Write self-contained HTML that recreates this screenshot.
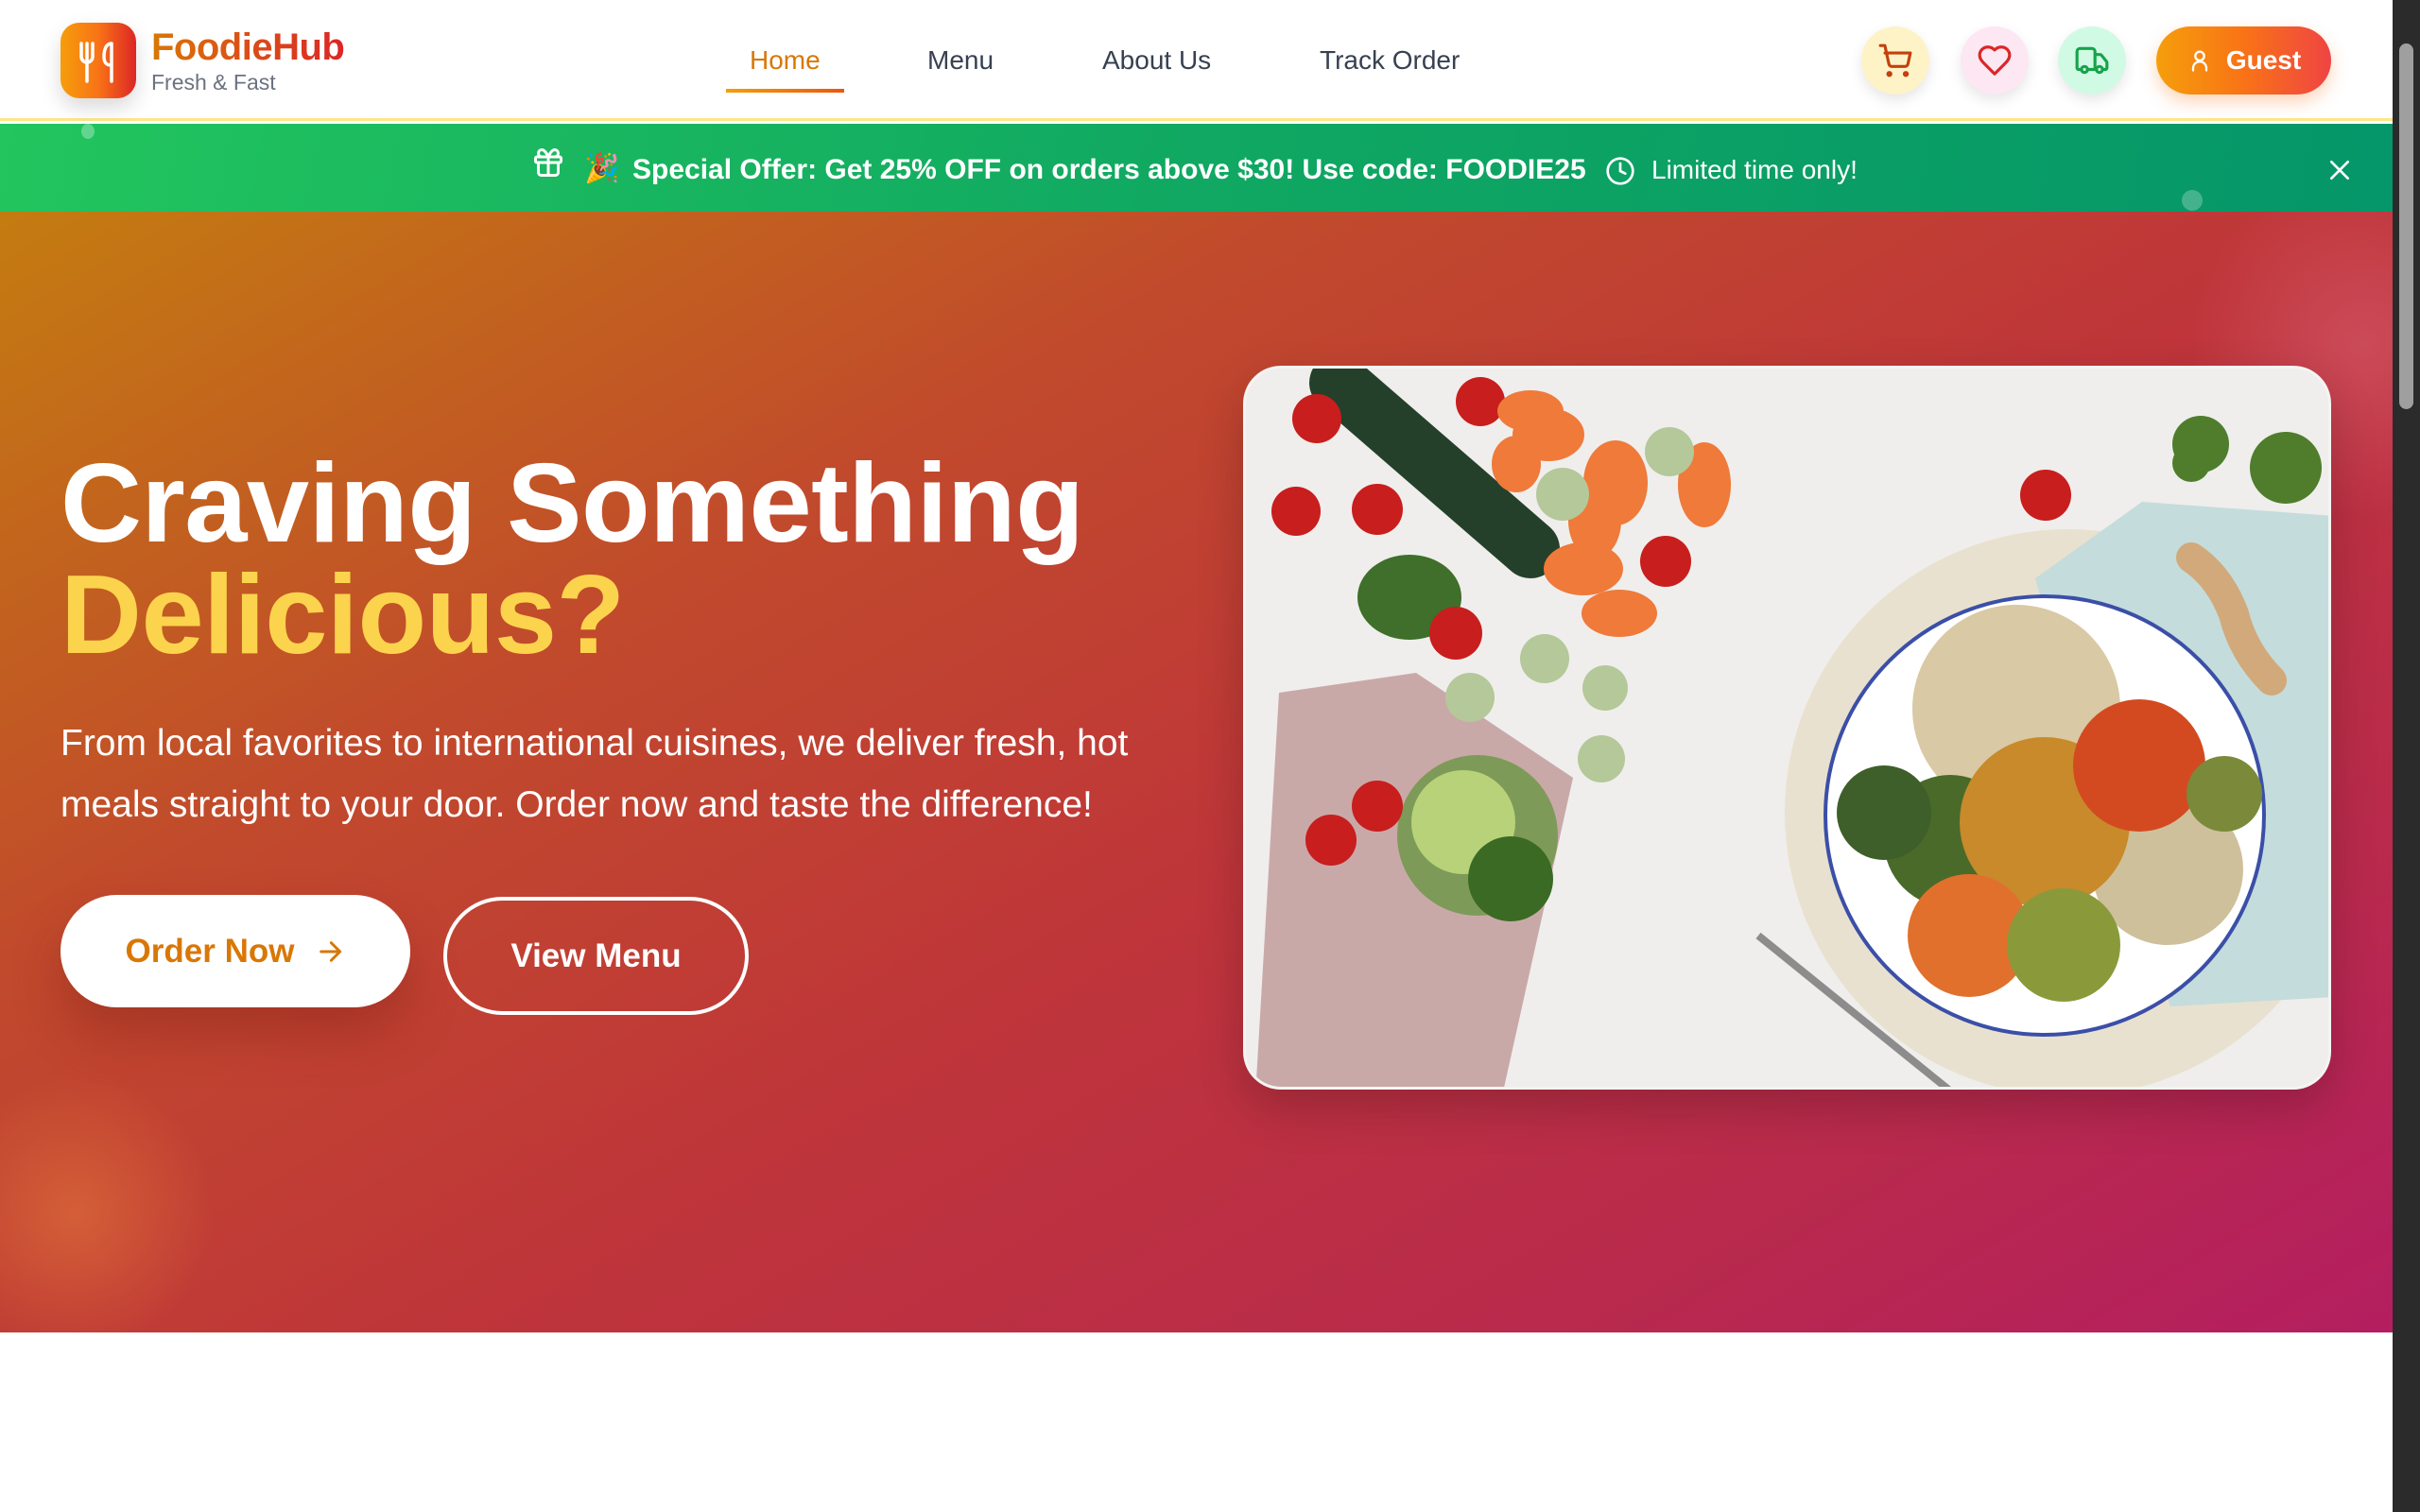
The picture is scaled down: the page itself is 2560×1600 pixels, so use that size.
<!DOCTYPE html>
<html><head><meta charset="utf-8"><style>
*{box-sizing:border-box;margin:0;padding:0}
body{width:2560px;height:1600px;overflow:hidden;background:#fff;font-family:"Liberation Sans",sans-serif;position:relative}
.header{position:absolute;left:0;top:0;width:2531px;height:128px;background:#fff;border-bottom:3px solid #fde68a}
.logo{position:absolute;left:64px;top:24px;width:80px;height:80px;border-radius:20px;background:linear-gradient(90deg,#f59e0b,#f97316 50%,#dc2626);box-shadow:0 10px 22px rgba(0,0,0,.15)}
.brand{position:absolute;left:160px;top:28px;font-size:40px;font-weight:bold;background:linear-gradient(90deg,#d97706,#dc2626);-webkit-background-clip:text;color:transparent;letter-spacing:-0.5px}
.tag{position:absolute;left:160px;top:74px;font-size:23px;color:#6b7280}
.nav a{position:absolute;top:48px;font-size:28px;color:#374151;text-decoration:none}
.ul{position:absolute;left:768px;top:94px;width:125px;height:4px;background:linear-gradient(90deg,#f59e0b,#ea580c)}
.ic{position:absolute;top:28px;width:72px;height:72px;border-radius:50%;box-shadow:0 6px 14px rgba(0,0,0,.1);display:flex;align-items:center;justify-content:center}
.guest{position:absolute;left:2281px;top:28px;width:185px;height:72px;border-radius:36px;background:linear-gradient(90deg,#f59e0b,#f97316 50%,#ef4444);box-shadow:0 8px 18px rgba(249,115,22,.3);color:#fff;font-size:28px;font-weight:bold;display:flex;align-items:center;justify-content:center;gap:14px}
.banner{position:absolute;left:0;top:131px;width:2531px;height:93px;background:linear-gradient(100deg,#22c55e,#10a862 50%,#059669);color:#fff}
.hero{position:absolute;left:0;top:224px;width:2531px;height:1186px;background:linear-gradient(150deg,#c47c10 0%,#c14a2c 30%,#bf353a 55%,#b92a4c 80%,#b41e60 100%);overflow:hidden}
h1{position:absolute;left:64px;top:250px;font-size:119px;line-height:118px;color:#fff;font-weight:bold;letter-spacing:-0.5px}
h1 span{color:#fcd34d}
.p{position:absolute;left:64px;top:530px;width:1230px;font-size:39px;line-height:65px;color:#fff}
.b1{position:absolute;left:64px;top:723px;width:370px;height:119px;border-radius:60px;background:#fff;color:#d97706;font-size:35px;font-weight:bold;display:flex;align-items:center;justify-content:center;gap:22px;box-shadow:0 30px 50px rgba(120,30,20,.35)}
.b2{position:absolute;left:469px;top:725px;width:323px;height:125px;border-radius:63px;border:4px solid #fff;color:#fff;font-size:35px;font-weight:bold;display:flex;align-items:center;justify-content:center}
.img{position:absolute;left:1315px;top:163px;width:1151px;height:766px;border-radius:40px;overflow:hidden;border:3px solid rgba(255,255,255,.35);background:#efeeec;box-shadow:0 20px 50px rgba(0,0,0,.2)}
.sb{position:absolute;left:2531px;top:0;width:29px;height:1600px;background:#2b2b2b}
</style></head><body>
<div class="header">
 <div class="logo"><svg width="80" height="80" viewBox="0 0 80 80" fill="none" stroke="#fff" stroke-width="3.5" stroke-linecap="round"><path d="M22 22v14a6 6 0 0 0 12 0V22M28 22v40"/><path d="M54 22c-6 0-8 7-8 14s3 9 8 9V62M54 22v24"/></svg></div>
 <div class="brand">FoodieHub</div>
 <div class="tag">Fresh &amp; Fast</div>
 <div class="nav"><a style="left:793px;color:#d97706">Home</a><a style="left:981px">Menu</a><a style="left:1166px">About Us</a><a style="left:1396px">Track Order</a></div>
 <div class="ul"></div>
 <div class="ic" style="left:1969px;background:#fef3c7"><svg width="38" height="38" viewBox="0 0 24 24" fill="none" stroke="#c2410c" stroke-width="2" stroke-linecap="round" stroke-linejoin="round"><circle cx="8" cy="21" r="1"/><circle cx="19" cy="21" r="1"/><path d="M2 2h3l2.7 12.4a2 2 0 0 0 2 1.6h8.7a2 2 0 0 0 2-1.6L22 7H5.1"/></svg></div>
 <div class="ic" style="left:2074px;background:#fce7f3"><svg width="38" height="38" viewBox="0 0 24 24" fill="none" stroke="#dc2626" stroke-width="2" stroke-linejoin="round"><path d="M19 14c1.5-1.5 3-3.2 3-5.5A5.5 5.5 0 0 0 16.5 3c-1.8 0-3 .5-4.5 2-1.5-1.5-2.7-2-4.5-2A5.5 5.5 0 0 0 2 8.5c0 2.3 1.5 4 3 5.5l7 7Z"/></svg></div>
 <div class="ic" style="left:2177px;background:#d1fae5"><svg width="38" height="38" viewBox="0 0 24 24" fill="none" stroke="#16a34a" stroke-width="2" stroke-linecap="round" stroke-linejoin="round"><path d="M14 18V6a2 2 0 0 0-2-2H4a2 2 0 0 0-2 2v11a1 1 0 0 0 1 1h2M15 18H9M19 18h2a1 1 0 0 0 1-1v-3.6a1 1 0 0 0-.2-.6l-3.5-4.4A1 1 0 0 0 17.5 8H14"/><circle cx="17" cy="18" r="2"/><circle cx="7" cy="18" r="2"/></svg></div>
 <div class="guest"><svg width="28" height="28" viewBox="0 0 24 24" fill="none" stroke="#fff" stroke-width="2" stroke-linecap="round"><circle cx="12" cy="8" r="4"/><path d="M6 21v-2a6 6 0 0 1 12 0v2"/></svg>Guest</div>
</div>
<div class="banner">
 <div style="position:absolute;left:86px;top:0;width:14px;height:16px;border-radius:50%;background:rgba(255,255,255,.3)"></div>
 <div style="position:absolute;left:2308px;top:70px;width:22px;height:22px;border-radius:50%;background:rgba(255,255,255,.25)"></div>
 <svg style="position:absolute;left:562px;top:22px" width="36" height="38" viewBox="0 0 24 24" fill="none" stroke="#fff" stroke-width="2" stroke-linecap="round"><rect x="3" y="8" width="18" height="4" rx="1"/><path d="M12 8v13M19 12v7a2 2 0 0 1-2 2H7a2 2 0 0 1-2-2v-7M7.5 8a2.5 2.5 0 0 1 0-5C10 3 12 8 12 8s2-5 4.5-5a2.5 2.5 0 0 1 0 5"/></svg>
 <div style="position:absolute;left:618px;top:30px;font-size:30px">🎉</div>
 <div style="position:absolute;left:669px;top:32px;font-size:30px;font-weight:bold;white-space:nowrap">Special Offer: Get 25% OFF on orders above $30! Use code: FOODIE25</div>
 <svg style="position:absolute;left:1698px;top:34px" width="32" height="32" viewBox="0 0 24 24" fill="none" stroke="#fff" stroke-width="2" stroke-linecap="round"><circle cx="12" cy="12" r="10"/><path d="M12 6v6l4 2"/></svg>
 <div style="position:absolute;left:1747px;top:33px;font-size:28px;white-space:nowrap">Limited time only!</div>
 <svg style="position:absolute;left:2462px;top:36px" width="26" height="26" viewBox="0 0 24 24" fill="none" stroke="#fff" stroke-width="2.5" stroke-linecap="round"><path d="M4 4l16 16M20 4L4 20"/></svg>
</div>
<div class="hero">
 <div style="position:absolute;left:-80px;top:900px;width:320px;height:320px;border-radius:50%;background:radial-gradient(circle,rgba(230,120,60,.55),rgba(230,120,60,0) 65%)"></div>
 <div style="position:absolute;left:2300px;top:-60px;width:400px;height:400px;border-radius:50%;background:radial-gradient(circle,rgba(230,120,140,.35),rgba(230,120,140,0) 65%)"></div>
 <h1>Craving Something<br><span>Delicious?</span></h1>
 <div class="p">From local favorites to international cuisines, we deliver fresh, hot meals straight to your door. Order now and taste the difference!</div>
 <div class="b1">Order Now <svg width="32" height="32" viewBox="0 0 24 24" fill="none" stroke="#d97706" stroke-width="2.2" stroke-linecap="round" stroke-linejoin="round"><path d="M5 12h14M13 5l7 7-7 7"/></svg></div>
 <div class="b2">View Menu</div>
 <div class="img"><svg width="1151" height="766" viewBox="0 0 1151 766">
  <rect width="1151" height="766" fill="#efeeec"/>
  <polygon points="35,343 180,322 346,433 271,770 10,770" fill="#c9a9a8"/>
  <circle cx="870" cy="470" r="300" fill="#e9e1cf"/>
  <polygon points="835,222 948,141 1151,156 1151,665 978,675 905,470" fill="#c4dcdc"/>
  <circle cx="845" cy="473" r="232" fill="#fff" stroke="#3b4fa8" stroke-width="4"/>
  <circle cx="815" cy="360" r="110" fill="#d9c9a4"/>
  <circle cx="975" cy="530" r="80" fill="#cfc09c"/>
  <circle cx="745" cy="500" r="70" fill="#4a6a2a"/>
  <circle cx="845" cy="480" r="90" fill="#c88a2a"/>
  <circle cx="945" cy="420" r="70" fill="#d44a20"/>
  <circle cx="765" cy="600" r="65" fill="#e1702c"/>
  <circle cx="865" cy="610" r="60" fill="#8a9a3a"/>
  <circle cx="675" cy="470" r="50" fill="#3f5f2a"/>
  <circle cx="1035" cy="450" r="40" fill="#7a8a3a"/>
  <path d="M1000 200 q30 20 45 60 q10 40 40 70" stroke="#d2a97a" stroke-width="32" fill="none" stroke-linecap="round"/>
  <path d="M98 15 L301 191" stroke="#25402a" stroke-width="62" stroke-linecap="round"/>
  <path d="M542 600 L752 770" stroke="#8c8c8c" stroke-width="8"/>
  <circle cx="245" cy="494" r="85" fill="#7e9a58"/>
  <circle cx="230" cy="480" r="55" fill="#b8d27a"/>
  <circle cx="280" cy="540" r="45" fill="#3b6a24"/>
  <ellipse cx="173" cy="242" rx="55" ry="45" fill="#3f6f2a"/>
  <g fill="#c81e1e"><circle cx="75" cy="53" r="26"/><circle cx="248" cy="35" r="26"/><circle cx="53" cy="151" r="26"/><circle cx="139" cy="149" r="27"/><circle cx="444" cy="204" r="27"/><circle cx="222" cy="280" r="28"/><circle cx="846" cy="134" r="27"/><circle cx="139" cy="463" r="27"/><circle cx="90" cy="499" r="27"/></g>
  <g fill="#ef7a3a"><ellipse cx="320" cy="70" rx="38" ry="28"/><ellipse cx="301" cy="45" rx="35" ry="22"/><ellipse cx="391" cy="121" rx="34" ry="45"/><ellipse cx="485" cy="123" rx="28" ry="45"/><ellipse cx="357" cy="212" rx="42" ry="28"/><ellipse cx="395" cy="259" rx="40" ry="25"/><ellipse cx="369" cy="161" rx="28" ry="40"/><ellipse cx="286" cy="101" rx="26" ry="30"/></g>
  <g fill="#b4c89a"><circle cx="335" cy="133" r="28"/><circle cx="448" cy="88" r="26"/><circle cx="316" cy="307" r="26"/><circle cx="380" cy="338" r="24"/><circle cx="237" cy="348" r="26"/><circle cx="376" cy="413" r="25"/></g>
  <g fill="#4f7d2c"><circle cx="1010" cy="80" r="30"/><circle cx="1100" cy="105" r="38"/><circle cx="1000" cy="100" r="20"/></g>
 </svg></div>
</div>
<div class="sb"><div style="position:absolute;left:7px;top:46px;width:15px;height:387px;border-radius:8px;background:#9f9f9f"></div></div>
</body></html>
